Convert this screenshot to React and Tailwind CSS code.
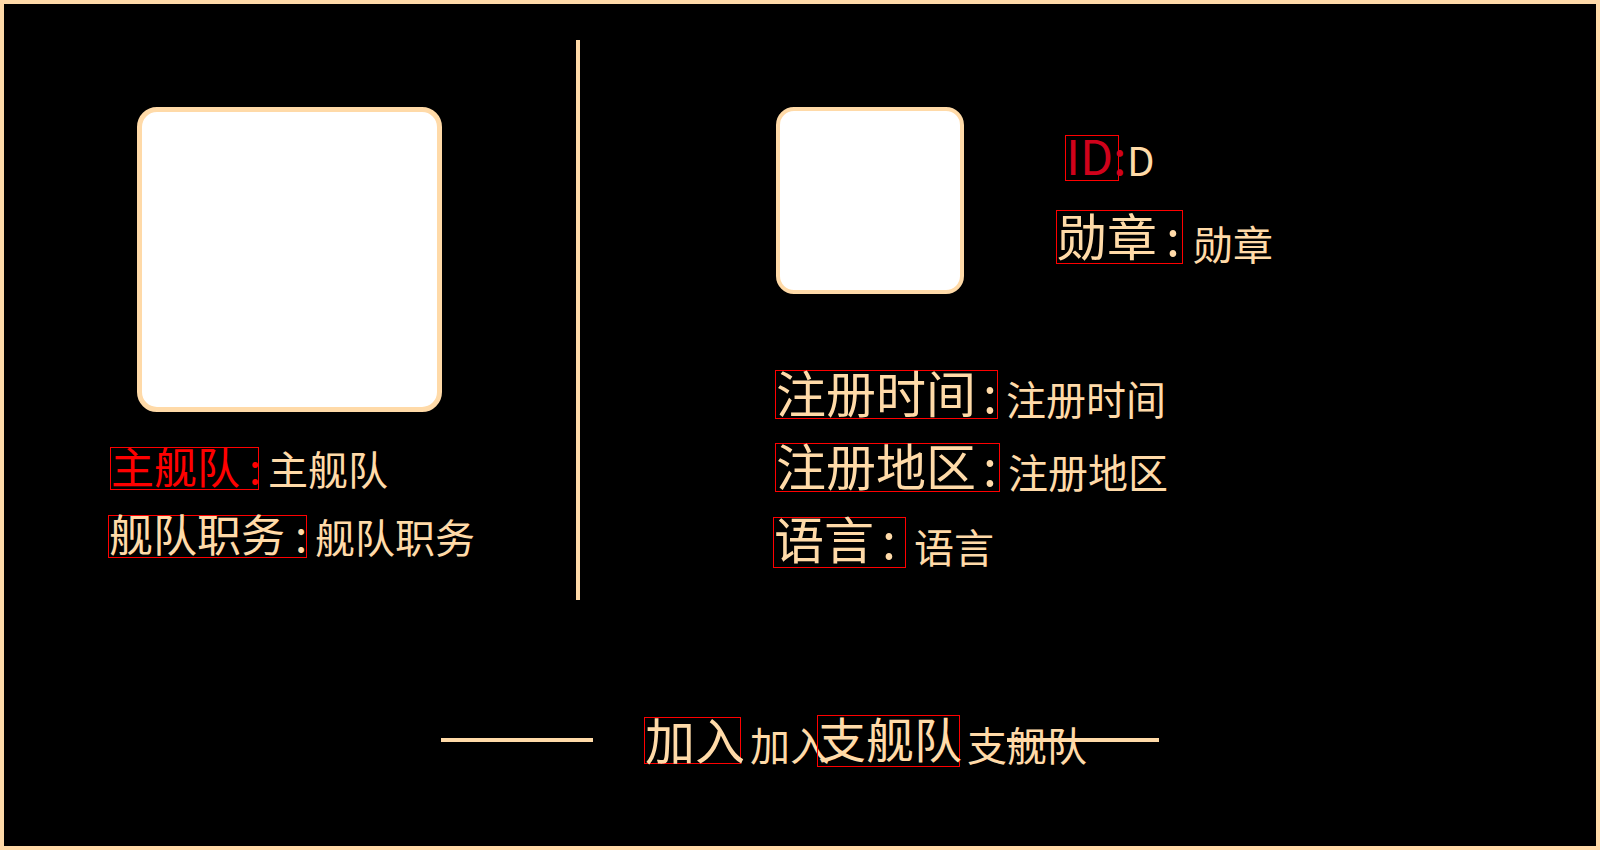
import React from "react";

function Field({ rowCls, labelCls, label, colonCls, value, valueCls }) {
  return (
    <div className={`flex shrink-0 items-start ${rowCls}`}>
      <span
        className={`block shrink-0 whitespace-nowrap border border-[#ff0000] ${labelCls}`}
      >
        {label}
        {colonCls !== undefined && <span className={colonCls}>:</span>}
      </span>
      <span
        className={`block shrink-0 whitespace-nowrap text-[40px] leading-[40px] text-[#ffdaa8] ${valueCls}`}
      >
        {value}
      </span>
    </div>
  );
}

export default function App() {
  return (
    <div className="box-border flex h-[850px] w-[1600px] flex-col overflow-hidden border-4 border-[#ffdaa8] bg-black font-['Noto_Sans_CJK_SC','Noto_Sans',sans-serif] text-[#ffdaa8]">
      {/* top section */}
      <div className="mt-[36px] flex h-[560px] shrink-0">
        {/* left column */}
        <div className="flex w-[572px] shrink-0 flex-col">
          <div className="ml-[133px] mt-[67px] box-border h-[305px] w-[305px] shrink-0 rounded-[20px] border-[5px] border-[#ffdaa8] bg-white" />
          <Field
            rowCls="ml-[106px] mt-[35px] h-[43px]"
            labelCls="w-[149px] h-[43px] text-[43px] leading-[34px] text-[#ff0000]"
            label="主舰队"
            colonCls="ml-[9px]"
            value="主舰队"
            valueCls="ml-[9px] mt-[1px]"
          />
          <Field
            rowCls="ml-[104px] mt-[25px] h-[43px]"
            labelCls="w-[199px] h-[43px] text-[44px] leading-[34px] text-[#ffdaa8]"
            label="舰队职务"
            colonCls="ml-[10px]"
            value="舰队职务"
            valueCls="ml-[8px] mt-[1px]"
          />
        </div>

        {/* divider */}
        <div className="h-[560px] w-[4px] shrink-0 bg-[#ffdaa8]" />

        {/* right column */}
        <div className="flex flex-1 flex-col">
          <div className="flex shrink-0 items-start">
            <div className="ml-[196px] mt-[67px] box-border h-[187px] w-[188px] shrink-0 rounded-[18px] border-4 border-[#ffdaa8] bg-white" />
            <div className="ml-[92px] mt-[95px] flex flex-col">
              <Field
                rowCls="ml-[9px] h-[46px]"
                labelCls="w-[54px] h-[46px] text-[48px] leading-[36px] text-[#d0021b]"
                label="ID"
                colonCls=""
                value="D"
                valueCls="ml-[8px] mt-[4px]"
              />
              <Field
                rowCls="mt-[29px] h-[54px]"
                labelCls="w-[127px] h-[54px] text-[50px] leading-[47px] text-[#ffdaa8]"
                label="勋章"
                colonCls="ml-[9px]"
                value="勋章"
                valueCls="ml-[10px] mt-[13px]"
              />
            </div>
          </div>
          <Field
            rowCls="ml-[195px] mt-[76px] h-[49px]"
            labelCls="w-[223px] h-[49px] text-[50px] leading-[40px] text-[#ffdaa8]"
            label="注册时间"
            colonCls="ml-[7px]"
            value="注册时间"
            valueCls="ml-[8px] mt-[8px]"
          />
          <Field
            rowCls="ml-[195px] mt-[24px] h-[49px]"
            labelCls="w-[225px] h-[49px] text-[50px] leading-[40px] text-[#ffdaa8]"
            label="注册地区"
            colonCls="ml-[7px]"
            value="注册地区"
            valueCls="ml-[8px] mt-[8px]"
          />
          <Field
            rowCls="ml-[193px] mt-[25px] h-[51px]"
            labelCls="w-[133px] h-[51px] text-[50px] leading-[38px] text-[#ffdaa8]"
            label="语言"
            colonCls="ml-[8px]"
            value="语言"
            valueCls="ml-[8px] mt-[9px]"
          />
        </div>
      </div>

      {/* bottom section */}
      <div className="mt-[115px] flex shrink-0 items-start justify-center">
        <div className="mt-[23px] h-[4px] w-[152px] shrink-0 bg-[#ffdaa8]" />
        <div className="flex w-[414px] shrink-0 items-start pl-[51px]">
          <div className="mt-[2px] w-[173px] shrink-0">
            <Field
              rowCls="h-[47px]"
              labelCls="w-[97px] h-[47px] text-[50px] leading-[40px] text-[#ffdaa8]"
              label="加入"
              value="加入"
              valueCls="ml-[9px] mt-[7px]"
            />
          </div>
          <Field
            rowCls="h-[52px]"
            labelCls="w-[143px] h-[52px] text-[48px] leading-[42px] text-[#ffdaa8]"
            label="支舰队"
            value="支舰队"
            valueCls="ml-[7px] mt-[9px]"
          />
        </div>
        <div className="relative mt-[23px] h-[4px] w-[152px] shrink-0 bg-[#ffdaa8]" />
      </div>
    </div>
  );
}
